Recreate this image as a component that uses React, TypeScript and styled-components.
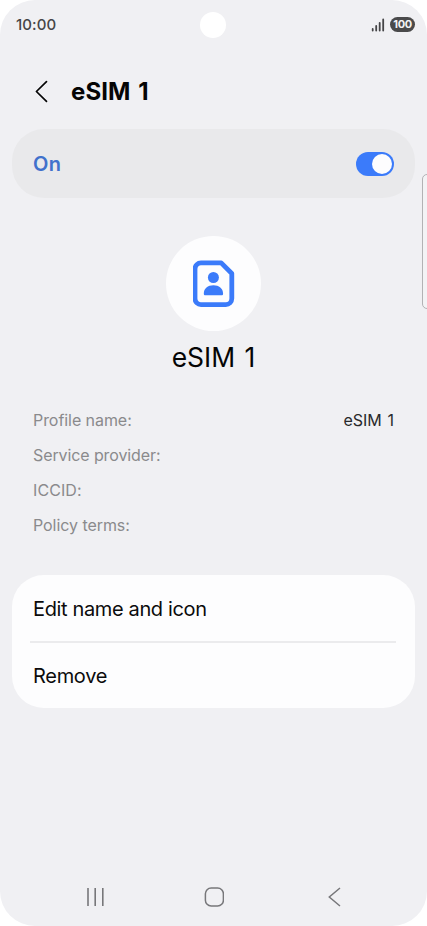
import React from 'react';
import styled, { createGlobalStyle } from 'styled-components';

const GlobalStyle = createGlobalStyle`
  *, *::before, *::after { box-sizing: border-box; }
  html, body { margin: 0; padding: 0; background: #fff; }
  body { font-family: Inter, 'Liberation Sans', sans-serif; color: #050505; }
  svg { display: block; }
`;

const Screen = styled.main`
  position: relative;
  width: 427px;
  height: 926px;
  display: flex;
  flex-direction: column;
  overflow: hidden;
  background: #f0f0f3;
  border-radius: 35px;
`;

const StatusBar = styled.header`
  height: 48px;
  padding: 1px 12px 0 16px;
  display: flex;
  align-items: center;
  justify-content: space-between;
  color: #454547;
`;

const Clock = styled.time`
  font-size: 15px;
  font-weight: 500;
  line-height: 20px;
  letter-spacing: 0.1px;
`;

const Indicators = styled.div`
  display: flex;
  align-items: center;
  gap: 5px;
`;

const Battery = styled.span`
  width: 25px;
  height: 15px;
  border-radius: 8px;
  background: #4a4a4b;
  color: #f4f4f5;
  font-size: 11px;
  font-weight: 700;
  line-height: 15px;
  text-align: center;
  letter-spacing: -0.35px;
`;

const Camera = styled.span`
  position: absolute;
  top: 12px;
  left: 200px;
  width: 26px;
  height: 26px;
  border-radius: 50%;
  background: #fff;
`;

const EdgeHandle = styled.span`
  position: absolute;
  top: 174px;
  right: -6px;
  width: 11px;
  height: 135px;
  border: 1px solid #b2b2b4;
  border-radius: 5px;
  background: #f3f3f5;
`;

const TitleBar = styled.div`
  height: 81px;
  padding: 6px 0 0 34px;
  display: flex;
  align-items: center;
  gap: 22px;
`;

const BackButton = styled.button`
  padding: 0;
  border: 0;
  background: none;
  color: #050505;
`;

const Title = styled.h1`
  margin: 0;
  font-size: 24px;
  line-height: 30px;
  font-weight: 700;
  letter-spacing: 0.1px;
  word-spacing: 2px;
`;

const SwitchCard = styled.section`
  height: 69px;
  margin: 0 12px;
  padding: 0 21px;
  display: flex;
  align-items: center;
  justify-content: space-between;
  border-radius: 32px;
  background: #e9e9eb;
`;

const SwitchLabel = styled.span`
  padding-top: 1px;
  font-size: 20px;
  line-height: 26px;
  font-weight: 600;
  letter-spacing: 0.4px;
  color: #4171cc;
`;

const Toggle = styled.button`
  width: 38px;
  height: 24px;
  padding: 2px;
  border: 0;
  border-radius: 12px;
  display: flex;
  justify-content: flex-end;
  background: #3b7bfa;
`;

const Knob = styled.span`
  width: 20px;
  height: 20px;
  border-radius: 50%;
  background: #fdfdfe;
`;

const Profile = styled.section`
  margin-top: 38px;
  display: flex;
  flex-direction: column;
  align-items: center;
`;

const Avatar = styled.div`
  width: 95px;
  height: 95px;
  border-radius: 50%;
  background: #fdfdfe;
  display: grid;
  place-items: center;
`;

const ProfileName = styled.h2`
  margin: 9px 0 0;
  font-size: 26.5px;
  line-height: 34px;
  font-weight: 400;
  word-spacing: 2px;
`;

const Details = styled.dl`
  margin: 28px 33px 0;
`;

const DetailRow = styled.div`
  height: 35.2px;
  display: flex;
  align-items: center;
  justify-content: space-between;
  font-size: 16px;
`;

const Term = styled.dt<{ $spacing: number }>`
  color: #8a8a8c;
  letter-spacing: ${(p) => p.$spacing}px;
`;

const Value = styled.dd`
  margin: 0;
  color: #29292b;
  word-spacing: 1.2px;
`;

const ActionCard = styled.section`
  height: 133px;
  margin: 32px 12px 0;
  border-radius: 32px;
  background: #fdfdfe;
`;

const Action = styled.button<{ $spacing: number }>`
  width: 100%;
  height: 66px;
  padding: 2px 21px 0;
  border: 0;
  display: flex;
  align-items: center;
  background: none;
  color: #0b0b0c;
  font-family: inherit;
  font-size: 20px;
  letter-spacing: ${(p) => p.$spacing}px;

  & + hr + & { padding-top: 0; }
`;

const Divider = styled.hr`
  height: 2px;
  margin: 0 19px 0 18px;
  border: 0;
  background: #ebebed;
`;

const NavBar = styled.nav`
  height: 58px;
  margin-top: auto;
  padding: 0 85px;
  display: grid;
  grid-template-columns: 119px 1fr auto;
  align-items: center;
  color: #77777a;
`;

const SignalIcon = () => (
  <svg width="14" height="16" viewBox="0 0 14 16" fill="none" stroke="currentColor" strokeWidth="1.8" strokeLinecap="round">
    <path d="M1.7 12V13.6M5.2 9V13.6M8.7 5.8V13.6M12.2 2.4V13.6" />
  </svg>
);

const BackIcon = () => (
  <svg width="15" height="24" viewBox="0 0 15 24" fill="none" stroke="currentColor" strokeWidth="1.7" strokeLinecap="round" strokeLinejoin="round">
    <path d="M12.5 1.6 2.4 11.5l10.1 9.9" />
  </svg>
);

const SimIcon = () => (
  <svg width="42" height="47" viewBox="0 0 42 47" fill="none">
    <path
      d="M8 2.9h20.2L38.8 13.5v25.1a6 6 0 0 1-6 6H8a6 6 0 0 1-6-6V8.9a6 6 0 0 1 6-6Z"
      stroke="#3b7bfa"
      strokeWidth="4.8"
      strokeLinejoin="round"
    />
    <circle cx="20.4" cy="17.5" r="5.5" fill="#3b7bfa" />
    <path d="M10.8 33.7c0-5.5 4-8.5 9.6-8.5s9.7 3 9.7 8.5c0 1-.6 1.6-1.6 1.6H12.4c-1 0-1.6-.6-1.6-1.6Z" fill="#3b7bfa" />
  </svg>
);

const RecentsIcon = () => (
  <svg width="20" height="20" viewBox="0 0 20 20" stroke="currentColor" strokeWidth="1.6">
    <path d="M3 1v18M10.2 1v18M17.8 1v18" />
  </svg>
);

const HomeIcon = () => (
  <svg width="20" height="20" viewBox="0 0 20 20" fill="none" stroke="currentColor" strokeWidth="1.5">
    <rect x="1.4" y="1" width="18" height="18" rx="5.8" />
  </svg>
);

const NavBackIcon = () => (
  <svg width="14" height="20" viewBox="0 0 14 20" fill="none" stroke="currentColor" strokeWidth="1.5">
    <path d="M12 1 1.3 10l10.7 9" />
  </svg>
);

const details = [
  { term: 'Profile name:', value: 'eSIM 1', spacing: -0.06 },
  { term: 'Service provider:', value: '', spacing: -0.1 },
  { term: 'ICCID:', value: '', spacing: 0.1 },
  { term: 'Policy terms:', value: '', spacing: -0.06 },
];

export default function App() {
  return (
    <>
      <GlobalStyle />
      <Screen>
        <StatusBar>
          <Clock>10:00</Clock>
          <Indicators>
            <SignalIcon />
            <Battery>100</Battery>
          </Indicators>
        </StatusBar>
        <Camera />
        <EdgeHandle />
        <TitleBar>
          <BackButton aria-label="Back"><BackIcon /></BackButton>
          <Title>eSIM 1</Title>
        </TitleBar>
        <SwitchCard>
          <SwitchLabel>On</SwitchLabel>
          <Toggle role="switch" aria-checked="true" aria-label="eSIM 1"><Knob /></Toggle>
        </SwitchCard>
        <Profile>
          <Avatar><SimIcon /></Avatar>
          <ProfileName>eSIM 1</ProfileName>
        </Profile>
        <Details>
          {details.map((d) => (
            <DetailRow key={d.term}>
              <Term $spacing={d.spacing}>{d.term}</Term>
              <Value>{d.value}</Value>
            </DetailRow>
          ))}
        </Details>
        <ActionCard>
          <Action $spacing={-0.36}>Edit name and icon</Action>
          <Divider />
          <Action $spacing={-0.3}>Remove</Action>
        </ActionCard>
        <NavBar>
          <RecentsIcon />
          <HomeIcon />
          <NavBackIcon />
        </NavBar>
      </Screen>
    </>
  );
}
